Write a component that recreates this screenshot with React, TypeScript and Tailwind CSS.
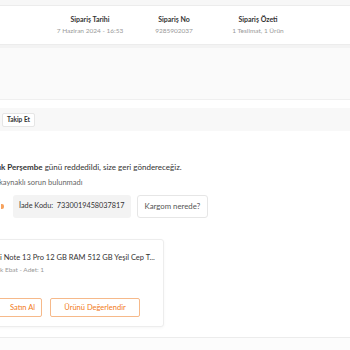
export default function App() {
  const summary = [
    { label: "Sipariş Tarihi", value: "7 Haziran 2024 - 16:53" },
    { label: "Sipariş No", value: "9285902037" },
    { label: "Sipariş Özeti", value: "1 Teslimat, 1 Ürün" },
  ];

  return (
    <div className="w-[350px] h-[350px] overflow-hidden bg-white font-['Lato',sans-serif] text-[#333]">
      <div className="h-[5px] bg-[#f7f7f7]" />
      {/* order summary header */}
      <div className="h-[40px] bg-white border-y border-[#ececec] flex items-center pl-[48px]">
        {summary.map((s) => (
          <div key={s.label} className="w-[84px] flex flex-col items-center gap-[2px]">
            <span className="text-[7px] font-bold leading-[9px] text-[#333]">{s.label}</span>
            <span className="text-[6.5px] leading-[9px] text-[#999]">{s.value}</span>
          </div>
        ))}
      </div>
      <div className="h-[3px] bg-[#f3f3f3]" />
      <div className="h-[52px] bg-[#fafafa] border-b border-[#efefef]" />
      <div className="h-[8px] bg-white" />
      {/* tracking bar */}
      <div className="h-[23px] bg-[#f8f8f8] flex items-center pl-[2px] pt-[1px]">
        <button className="h-[14px] px-[4px] bg-white border border-[#e6e6e6] rounded-[2px] text-[6.5px] font-bold leading-none text-[#333]">
          Takip Et
        </button>
      </div>

      <div className="pt-[31px]">
        <p className="-ml-[1px] whitespace-nowrap text-[8px] leading-[10px] text-[#333]">
          <span className="font-bold">ık Perşembe</span> günü reddedildi, size geri göndereceğiz.
        </p>
        <p className="mt-[6px] -ml-[1px] whitespace-nowrap text-[7.5px] leading-[10px] text-[#666]">
          kaynaklı sorun bulunmadı
        </p>

        <div className="mt-[7px] flex items-center gap-[5px] -ml-[20px]">
          <div className="h-[23px] w-[24px] flex items-center justify-end">
            <div className="w-[3px] h-[5px] rounded-r-[2px] bg-[#f27a1a] opacity-70" />
          </div>
          <div className="h-[23px] ml-[4px] px-[6px] flex items-center bg-[#f3f3f3] rounded-[3px] text-[7.3px] text-[#333] whitespace-nowrap">
            İade Kodu:&nbsp; 7330019458037817
          </div>
          <button className="h-[23px] ml-[1px] px-[7px] flex items-center bg-white border border-[#e6e6e6] rounded-[3px] text-[7.8px] text-[#555] whitespace-nowrap">
            Kargom nerede?
          </button>
        </div>

        {/* product card */}
        <div className="mt-[21px] -ml-[10px] w-[174px] h-[88px] bg-white border border-[#ededed] rounded-[3px] shadow-[0_1px_3px_rgba(0,0,0,0.04)] pl-[10px] pt-[13px]">
          <p className="-ml-[1px] whitespace-nowrap text-[7.5px] leading-[10px] text-[#333]">
            i Note 13 Pro 12 GB RAM 512 GB Yeşil Cep T...
          </p>
          <p className="mt-[2px] -ml-[1px] whitespace-nowrap text-[6.5px] leading-[9px] text-[#999]">
            k Ebat - Adet: 1
          </p>
          <div className="mt-[24px] flex gap-[8px] -ml-[20px]">
            <button className="h-[19px] w-[61px] flex items-center justify-end pr-[6px] border border-[#f6b98a] rounded-[2px] text-[7.5px] text-[#f27a1a] whitespace-nowrap">
              Satın Al
            </button>
            <button className="h-[19px] w-[90px] flex items-center justify-center border border-[#f6b98a] rounded-[2px] text-[7.5px] text-[#f27a1a] whitespace-nowrap">
              Ürünü Değerlendir
            </button>
          </div>
        </div>

        <div className="mt-[10px] border-t border-[#ececec] h-[20px] bg-[#fcfcfc]" />
      </div>
    </div>
  );
}
